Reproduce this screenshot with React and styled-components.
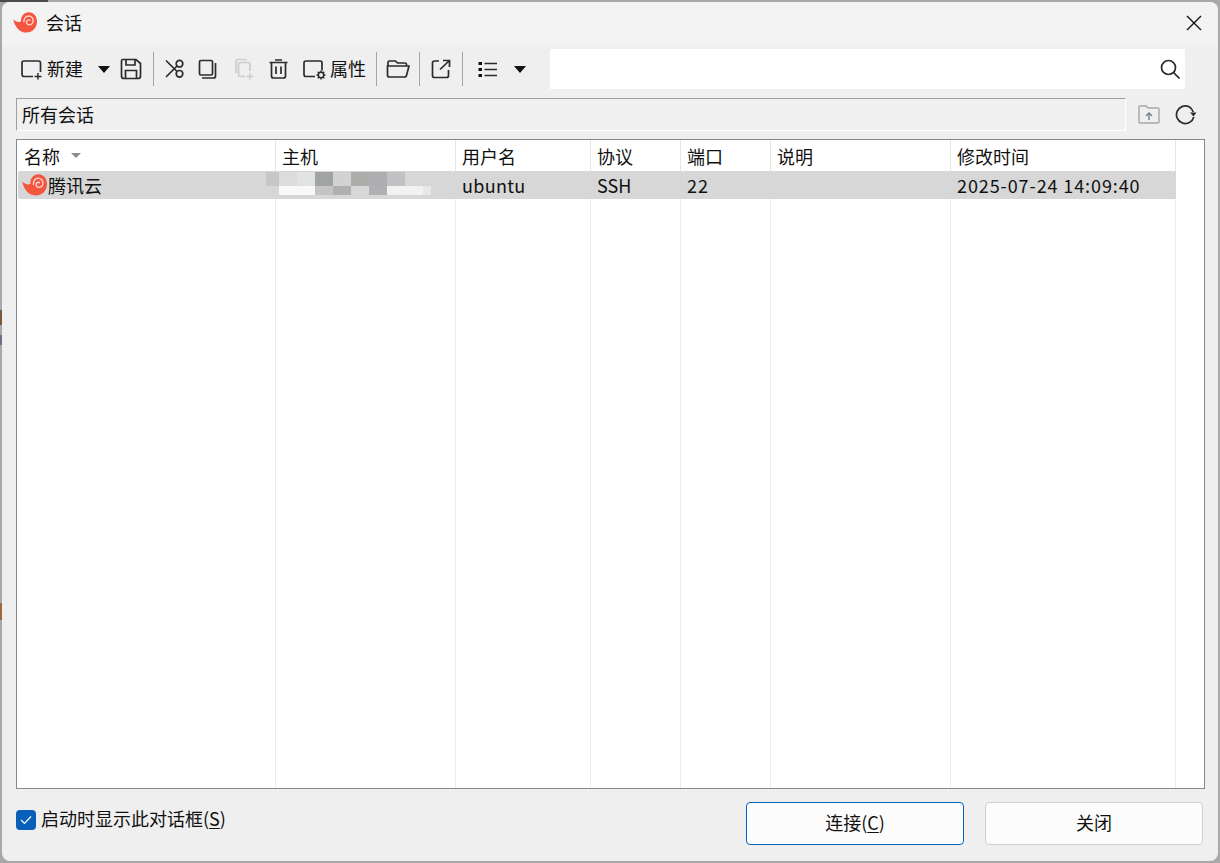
import React from "react";
import styled, { createGlobalStyle } from "styled-components";

const GlobalStyle = createGlobalStyle`
  html, body {
    margin: 0;
    padding: 0;
    height: 100%;
    background: #a8a8a8;
  }
  #root {
    height: 100%;
  }
  * {
    box-sizing: border-box;
  }
`;

const Screen = styled.div`
  position: relative;
  width: 1220px;
  height: 863px;
  padding: 2px 2px 2px 2px;
  font-family: "Noto Sans CJK SC", "Noto Sans", sans-serif;
  font-size: 18px;
  line-height: 24px;
  color: #111;
  overflow: hidden;
`;

// bits of the desktop behind the dialog that show past its edge
const BackdropMark = styled.div`
  position: absolute;
  left: 0;
  top: ${(p) => p.$top}px;
  width: ${(p) => p.$w}px;
  height: ${(p) => p.$h}px;
  background: ${(p) => p.$color};
`;

const Dialog = styled.div`
  display: flex;
  flex-direction: column;
  height: 100%;
  background: #efefef;
  border-radius: 8px;
  overflow: hidden;
`;

const TitleBar = styled.div`
  display: flex;
  align-items: center;
  flex: 0 0 43px;
  padding: 0 16px 2px 11px;
  background: #f3f3f3;
`;

const TitleText = styled.span`
  margin-left: 9px;
  margin-top: -2px;
  flex: 1;
`;

const Toolbar = styled.div`
  display: flex;
  align-items: center;
  height: 40px;
  margin-top: 4px;
  padding-left: 18px;
  padding-right: 33px;
`;

const ToolSlot = styled.div`
  display: flex;
  align-items: center;
  flex: 0 0 ${(p) => p.$w}px;
  height: 100%;
`;

const ToolLabel = styled.span`
  margin-left: ${(p) => p.$gap}px;
  margin-top: -2px;
`;

const Separator = styled.div`
  flex: 0 0 1px;
  height: 34px;
  background: #a5a5a5;
`;

const SearchBox = styled.div`
  display: flex;
  align-items: center;
  justify-content: flex-end;
  flex: 1;
  height: 40px;
  padding-right: 5px;
  background: #fff;
`;

const PathRow = styled.div`
  display: flex;
  align-items: center;
  height: 33px;
  margin: 9px 13px 0 14px;
`;

const PathInput = styled.div`
  display: flex;
  align-items: center;
  flex: 0 0 1110px;
  height: 33px;
  padding: 0 0 2px 5px;
  background: #f0f0f0;
  border: 1px solid #fff;
  border-top-color: #9f9f9f;
  border-left-color: #9f9f9f;
`;

const PathActions = styled.div`
  display: flex;
  align-items: center;
  gap: 15px;
  margin-left: 12px;
`;

const TableFrame = styled.div`
  display: flex;
  height: 650px;
  margin: 8px 13px 0 14px;
  padding-left: 1px;
  background: #fff;
  border: 1px solid #84898f;
`;

const Column = styled.div`
  display: flex;
  flex-direction: column;
  flex: 0 0 ${(p) => p.$w}px;
  position: relative;
  border-right: 1px solid #e1edf9;
`;

const HeaderCell = styled.div`
  display: flex;
  align-items: center;
  height: 31px;
  padding-left: 6px;
  margin-right: -1px;
  border-right: 1px solid #e6e6e6;
`;

const SortMark = styled.span`
  width: 0;
  height: 0;
  margin-left: 11px;
  border-left: 5px solid transparent;
  border-right: 5px solid transparent;
  border-top: 5px solid #8c8c8c;
`;

const RowCell = styled.div`
  display: flex;
  align-items: center;
  gap: 1px;
  height: 28px;
  margin-right: -1px;
  padding-left: ${(p) => (p.$first ? 4 : 6)}px;
  letter-spacing: ${(p) => p.$spacing || 0}px;
  background: #d7d7d7;
  border-radius: ${(p) => (p.$first ? "2px 0 0 2px" : "0")};
`;

const Mosaic = styled.div`
  position: absolute;
  left: -10px;
  top: 32px;
  width: 165px;
  height: 23px;
`;

const MosaicRow = styled.div`
  display: flex;
  height: ${(p) => p.$h}px;
`;

const Tile = styled.div`
  flex: 0 0 ${(p) => p.$w}px;
  background: ${(p) => p.$color};
`;

const Footer = styled.div`
  display: flex;
  align-items: flex-start;
  flex: 1;
  padding: 13px 15px 0 14px;
`;

const CheckRow = styled.label`
  display: flex;
  align-items: center;
  flex: 1;
  margin-top: 7px;
`;

const CheckMark = styled.span`
  display: flex;
  align-items: center;
  justify-content: center;
  width: 20px;
  height: 20px;
  margin-right: 5px;
  background: #0a5fb8;
  border-radius: 4px;
`;

const CheckText = styled.span`
  margin-top: -3px;
`;

const Hotkey = styled.span`
  text-decoration: underline;
  text-underline-offset: 2px;
  text-decoration-thickness: 1px;
`;

const Button = styled.div`
  display: flex;
  align-items: center;
  justify-content: center;
  width: 218px;
  height: 43px;
  padding-bottom: 3px;
  margin-left: ${(p) => (p.$primary ? 0 : 21)}px;
  background: #fcfcfc;
  border: 1px solid ${(p) => (p.$primary ? "#0067c0" : "#d0d0d0")};
  border-radius: 4px;
`;

const Icon = ({ w = 24, h = 24, children }) => (
  <svg width={w} height={h} viewBox={`0 0 ${w} ${h}`} fill="none" stroke="#2b2b2b" strokeWidth="1.7">
    {children}
  </svg>
);

const SnailLogo = ({ size = 24 }) => (
  <svg width={size} height={size * 0.875} viewBox="0 0 24 21">
    <path
      d="M0.3 7.2 C3 10 6 10.4 8 9.6 C7.6 4 11.4 0.3 15.6 0.3 C20.6 0.3 24 4.4 24 9.6 C24 15.8 19.4 20.6 13.4 20.6 C6.6 20.6 1.6 14.8 0.3 7.2 Z"
      fill="#f4553f"
    />
    <path
      d="M11 10.4 C10.6 6.4 13 4 15.6 4 C18.4 4 20.4 6.2 20.2 9 C20 11.6 17.8 13.2 15.6 12.8 C13.8 12.4 13 10.6 13.8 9 C14.6 7.6 16.6 7.6 17.2 8.8"
      fill="none"
      stroke="#ffd9d2"
      strokeWidth="1.300"
    />
  </svg>
);

const Caret = () => (
  <svg width="12" height="7" viewBox="0 0 12 7">
    <path d="M0 0 H12 L6 7 Z" fill="#111" />
  </svg>
);

const NewIcon = () => (
  <Icon w={23} h={22}>
    <path d="M13.500 3 H4 Q2 3 2 5 V16 Q2 18.500 4 18.500 H13 M20.500 14 V5 Q20.500 3 18.500 3 H13" />
    <path d="M18 15 V21.500 M14.500 18.500 H21.500" strokeWidth="1.500" />
  </Icon>
);

const SaveIcon = () => (
  <Icon w={22} h={22}>
    <path d="M3 1.500 H16 L20.500 5.500 V18 Q20.500 20.500 18 20.500 H4 Q1.500 20.500 1.500 18 V3 Q1.500 1.500 3 1.500 Z" />
    <path d="M6 1.500 V7 H15 V1.500 M5.500 20.500 V12.500 H16.500 V20.500" />
  </Icon>
);

const ScissorsIcon = () => (
  <Icon w={20} h={20}>
    <circle cx="14.500" cy="4.700" r="3.300" />
    <circle cx="14.500" cy="14.800" r="3.300" />
    <path d="M1 1.500 L12 12.500 M1 18 L12 7" />
  </Icon>
);

const CopyIcon = () => (
  <Icon w={19} h={20}>
    <path d="M3 1.500 H13 Q14.500 1.500 14.500 3 V14.500 Q14.500 16 13 16 H3 Q1.500 16 1.500 14.500 V3 Q1.500 1.500 3 1.500 Z" />
    <path d="M17.500 4 V17 Q17.500 19 15.500 19 H4" />
  </Icon>
);

const PasteIcon = () => (
  <Icon w={20} h={22}>
    <g stroke="#cccccc">
      <path d="M15 13 V6 Q15 4.500 13.500 4.500 H5 Q3.500 4.500 3.500 6 V17 Q3.500 18.500 5 18.500 H10" />
      <path d="M1 15 V3 Q1 1.500 2.500 1.500 H11.500" />
      <path d="M15 15 V21.500 M11.500 18.500 H18.500" strokeWidth="1.500" />
    </g>
  </Icon>
);

const TrashIcon = () => (
  <Icon w={19} h={20}>
    <path d="M0.500 3.500 H18.500 M6 1 H13" />
    <path d="M2.500 3.500 V17 Q2.500 19 4.500 19 H14.500 Q16.500 19 16.500 17 V3.500" />
    <path d="M7 7.500 V15 M12 7.500 V15" />
  </Icon>
);

const PropsIcon = () => (
  <Icon w={24} h={22}>
    <path d="M20 12.500 V5 Q20 3 18 3 H4 Q2 3 2 5 V16.500 Q2 18.500 4 18.500 H13" />
    <circle cx="19" cy="17" r="2.700" strokeWidth="1.500" />
    <path d="M19 12.500 V14 M19 20 V21.500 M14.500 17 H16 M22 17 H23.500 M15.800 13.800 L16.900 14.900 M21.100 19.100 L22.200 20.200 M22.200 13.800 L21.100 14.900 M16.900 19.100 L15.800 20.200" strokeWidth="1.400" />
  </Icon>
);

const FolderIcon = () => (
  <Icon w={24} h={20}>
    <path d="M2 7 V3.500 Q2 2 3.500 2 H9.500 L11.500 4 H19 Q20.500 4 20.500 5.500 V7" />
    <path d="M2 7 H23 L20.500 16.500 Q20.200 18 18.500 18 H3.500 Q1.500 18 1.500 16 V7 Z" />
  </Icon>
);

const ShareIcon = () => (
  <Icon w={20} h={20}>
    <path d="M8 2 H3.500 Q1.500 2 1.500 4 V16.500 Q1.500 18.500 3.500 18.500 H15.500 Q17.500 18.500 17.500 16.500 V11" />
    <path d="M9 10.500 L18 2 M12 1.500 H18.500 V8" />
  </Icon>
);

const ListIcon = () => (
  <Icon w={19} h={17}>
    <path d="M6.500 2.500 H19 M6.500 8.500 H19 M6.500 14.500 H19" />
    <path d="M0.500 1 H4 V4 H0.500 Z M0.500 7 H4 V10 H0.500 Z M0.500 13 H4 V16 H0.500 Z" fill="#111" stroke="none" />
  </Icon>
);

const SearchIcon = () => (
  <Icon w={20} h={20}>
    <circle cx="8.500" cy="8.500" r="7" />
    <path d="M13.500 13.500 L19.500 19.500" />
  </Icon>
);

const CloseIcon = () => (
  <Icon w={16} h={16}>
    <path d="M1 1 L15 15 M15 1 L1 15" strokeWidth="1.400" stroke="#111" />
  </Icon>
);

const FolderUpIcon = () => (
  <Icon w={22} h={19}>
    <g stroke="#a4a8ad" strokeWidth="1.400">
      <path d="M1 2 Q1 1 2 1 H8 L10 3 H20 Q21 3 21 4 V17 Q21 18 20 18 H2 Q1 18 1 17 Z" />
      <path d="M11 15 V8.500 M8 11 L11 8 L14 11" stroke="#6d7f8e" />
    </g>
  </Icon>
);

const RefreshIcon = () => (
  <svg width="22" height="20" viewBox="0 0 22 20" fill="none" stroke="#2b2b2b" strokeWidth="1.700">
    <path d="M18.800 12 A8.800 8.800 0 1 1 14.500 2 Q17 3.500 18.300 7" />
    <path d="M15 7.500 H21.500 L18.500 11.500 Z" fill="#2b2b2b" stroke="none" />
  </svg>
);

const columns = [
  { title: "名称", width: 258, sort: true },
  { title: "主机", width: 180 },
  { title: "用户名", width: 135, value: "ubuntu", spacing: 0.3 },
  { title: "协议", width: 90, value: "SSH" },
  { title: "端口", width: 90, value: "22", spacing: 1 },
  { title: "说明", width: 180 },
  { title: "修改时间", width: 225, value: "2025-07-24 14:09:40", spacing: 0.9 },
];

const mosaicTop = [
  [13, "#c8c7c5"], [18, "#dcdcdc"], [18, "#e2e4e3"], [18, "#a2a3a4"], [18, "#d2d2d2"],
  [18, "#acacaa"], [18, "#aeaeb0"], [18, "#c0c1c3"],
];

const mosaicBottom = [
  [13, "#d6d8d8"], [36, "#f8f8f8"], [18, "#c4c4c4"], [18, "#b0b0b0"], [18, "#d8d8d8"],
  [18, "#b0b0b2"], [36, "#f2f2f2"], [8, "#e8e8e8"],
];

const App = () => {
  return (
    <Screen>
      <GlobalStyle />
      <BackdropMark $top={0} $w={48} $h={2} $color="#4a4a4a" />
      <BackdropMark $top={310} $w={2} $h={15} $color="#7a5a3c" />
      <BackdropMark $top={335} $w={2} $h={10} $color="#6b7280" />
      <BackdropMark $top={603} $w={2} $h={17} $color="#a0693c" />
      <Dialog>
        <TitleBar>
          <SnailLogo />
          <TitleText>会话</TitleText>
          <CloseIcon />
        </TitleBar>

        <Toolbar>
          <ToolSlot $w={78}>
            <NewIcon />
            <ToolLabel $gap={4}>新建</ToolLabel>
          </ToolSlot>
          <ToolSlot $w={22}><Caret /></ToolSlot>
          <ToolSlot $w={33}><SaveIcon /></ToolSlot>
          <Separator />
          <ToolSlot $w={11} />
          <ToolSlot $w={33}><ScissorsIcon /></ToolSlot>
          <ToolSlot $w={37}><CopyIcon /></ToolSlot>
          <ToolSlot $w={34}><PasteIcon /></ToolSlot>
          <ToolSlot $w={33}><TrashIcon /></ToolSlot>
          <ToolSlot $w={74}>
            <PropsIcon />
            <ToolLabel $gap={4}>属性</ToolLabel>
          </ToolSlot>
          <Separator />
          <ToolSlot $w={9} />
          <ToolSlot $w={33}><FolderIcon /></ToolSlot>
          <Separator />
          <ToolSlot $w={11} />
          <ToolSlot $w={31}><ShareIcon /></ToolSlot>
          <Separator />
          <ToolSlot $w={15} />
          <ToolSlot $w={36}><ListIcon /></ToolSlot>
          <ToolSlot $w={36}><Caret /></ToolSlot>
          <SearchBox><SearchIcon /></SearchBox>
        </Toolbar>

        <PathRow>
          <PathInput>所有会话</PathInput>
          <PathActions>
            <FolderUpIcon />
            <RefreshIcon />
          </PathActions>
        </PathRow>

        <TableFrame>
          {columns.map((col, i) => (
            <Column key={col.title} $w={col.width}>
              <HeaderCell>
                {col.title}
                {col.sort && <SortMark />}
              </HeaderCell>
              <RowCell $first={i === 0} $spacing={col.spacing}>
                {i === 0 && <SnailLogo size={25} />}
                {i === 0 ? "腾讯云" : col.value}
              </RowCell>
              {i === 1 && (
                <Mosaic>
                  <MosaicRow $h={14}>
                    {mosaicTop.map(([w, c], n) => <Tile key={n} $w={w} $color={c} />)}
                  </MosaicRow>
                  <MosaicRow $h={9}>
                    {mosaicBottom.map(([w, c], n) => <Tile key={n} $w={w} $color={c} />)}
                  </MosaicRow>
                </Mosaic>
              )}
            </Column>
          ))}
        </TableFrame>

        <Footer>
          <CheckRow>
            <CheckMark>
              <svg width="12" height="10" viewBox="0 0 12 10" fill="none" stroke="#fff" strokeWidth="1.200">
                <path d="M1 5 L4.500 8.500 L11 1.500" />
              </svg>
            </CheckMark>
            <CheckText>启动时显示此对话框(<Hotkey>S</Hotkey>)</CheckText>
          </CheckRow>
          <Button $primary>连接(<Hotkey>C</Hotkey>)</Button>
          <Button>关闭</Button>
        </Footer>
      </Dialog>
    </Screen>
  );
};

export default App;
